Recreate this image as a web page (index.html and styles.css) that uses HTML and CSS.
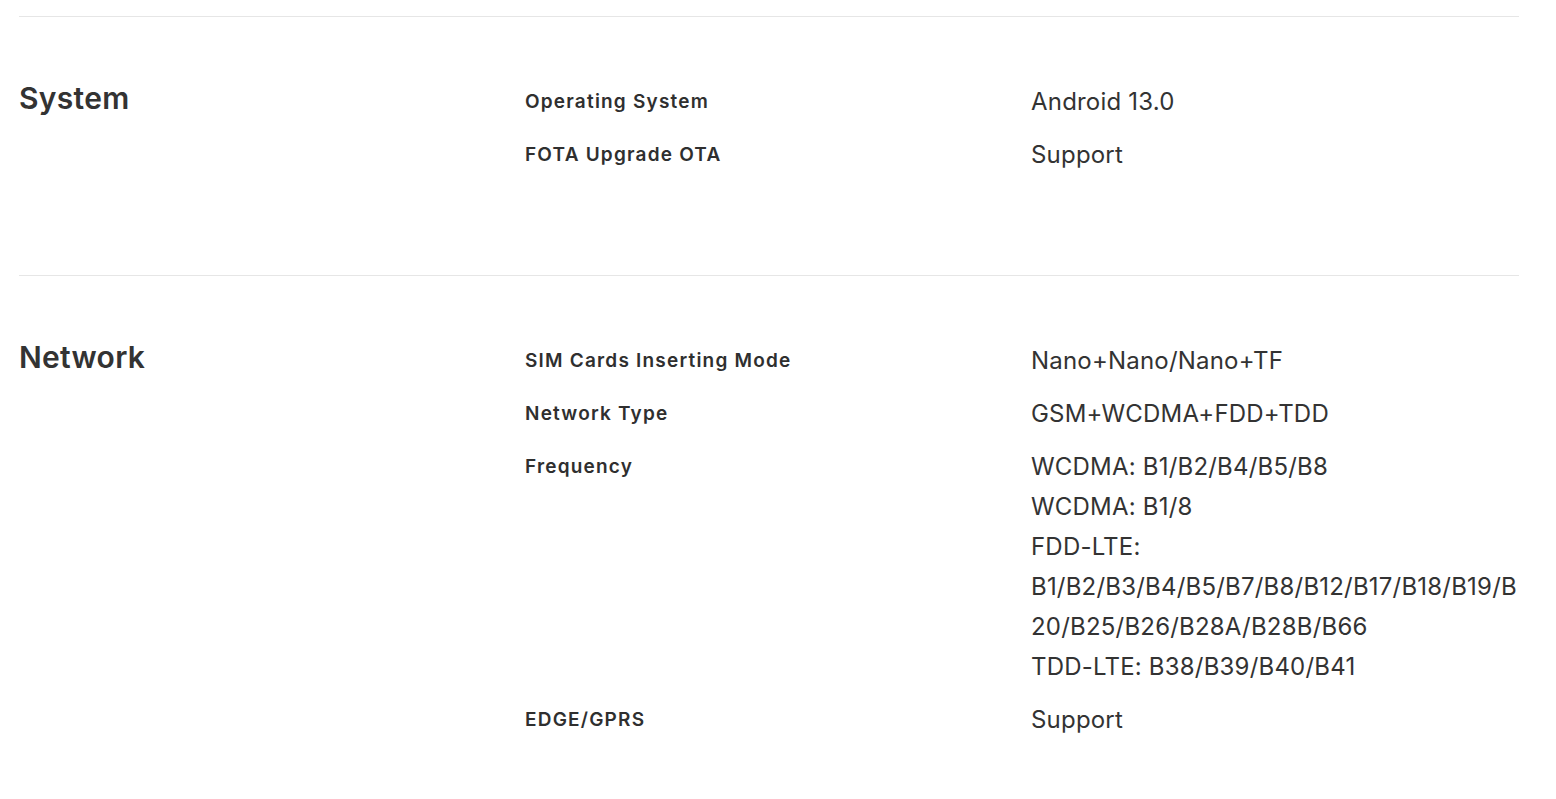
FILE: index.html
```html
<!DOCTYPE html>
<html lang="en">
<head>
<meta charset="utf-8">
<title>Specifications</title>
<link rel="stylesheet" href="styles.css">
</head>
<body>
<div class="specs">
  <section class="group">
    <h2 class="group-title">System</h2>
    <dl class="rows">
      <div class="row"><dt>Operating System</dt><dd><p>Android 13.0</p></dd></div>
      <div class="row"><dt>FOTA Upgrade OTA</dt><dd><p>Support</p></dd></div>
    </dl>
  </section>
  <section class="group">
    <h2 class="group-title">Network</h2>
    <dl class="rows">
      <div class="row"><dt>SIM Cards Inserting Mode</dt><dd><p>Nano+Nano/Nano+TF</p></dd></div>
      <div class="row"><dt>Network Type</dt><dd><p>GSM+WCDMA+FDD+TDD</p></dd></div>
      <div class="row"><dt>Frequency</dt><dd><p>WCDMA: B1/B2/B4/B5/B8</p><p>WCDMA: B1/8</p><p>FDD-LTE:</p><p class="wrap">B1/B2/B3/B4/B5/B7/B8/B12/B17/B18/B19/B20/B25/B26/B28A/B28B/B66</p><p>TDD-LTE: B38/B39/B40/B41</p></dd></div>
      <div class="row"><dt>EDGE/GPRS</dt><dd><p>Support</p></dd></div>
    </dl>
  </section>
</div>
</body>
</html>
```
FILE: styles.css
```css
html, body {
  margin: 0;
  padding: 0;
  background: #ffffff;
}
body {
  font-family: "Inter", "Liberation Sans", sans-serif;
  color: #333333;
}
.specs {
  width: 1500px;
  margin-left: 19px;
}
.group {
  display: grid;
  grid-template-columns: 488px 1012px;
  column-gap: 18px;
  align-items: start;
  border-top: 1px solid #e6e6e6;
  padding: 65px 0 100px;
  margin-top: 16px;
}
.group + .group {
  margin-top: 0;
}
.group-title {
  margin: 0;
  font-size: 30px;
  font-weight: 600;
  letter-spacing: 0.3px;
  line-height: 32px;
  color: #333333;
}
.rows {
  margin: 0;
  display: flex;
  flex-direction: column;
  gap: 13px;
}
.row {
  display: grid;
  grid-template-columns: 488px 488px;
  column-gap: 18px;
}
.row dt {
  font-size: 19px;
  font-weight: 600;
  letter-spacing: 1.2px;
  line-height: 40px;
  color: #2f2f2f;
}
.row dd {
  margin: 0;
  font-size: 24px;
  font-weight: 400;
  letter-spacing: 0.2px;
  line-height: 40px;
  color: #333333;
}
.row dd p {
  margin: 0;
}
.wrap {
  word-break: break-all;
}
```
